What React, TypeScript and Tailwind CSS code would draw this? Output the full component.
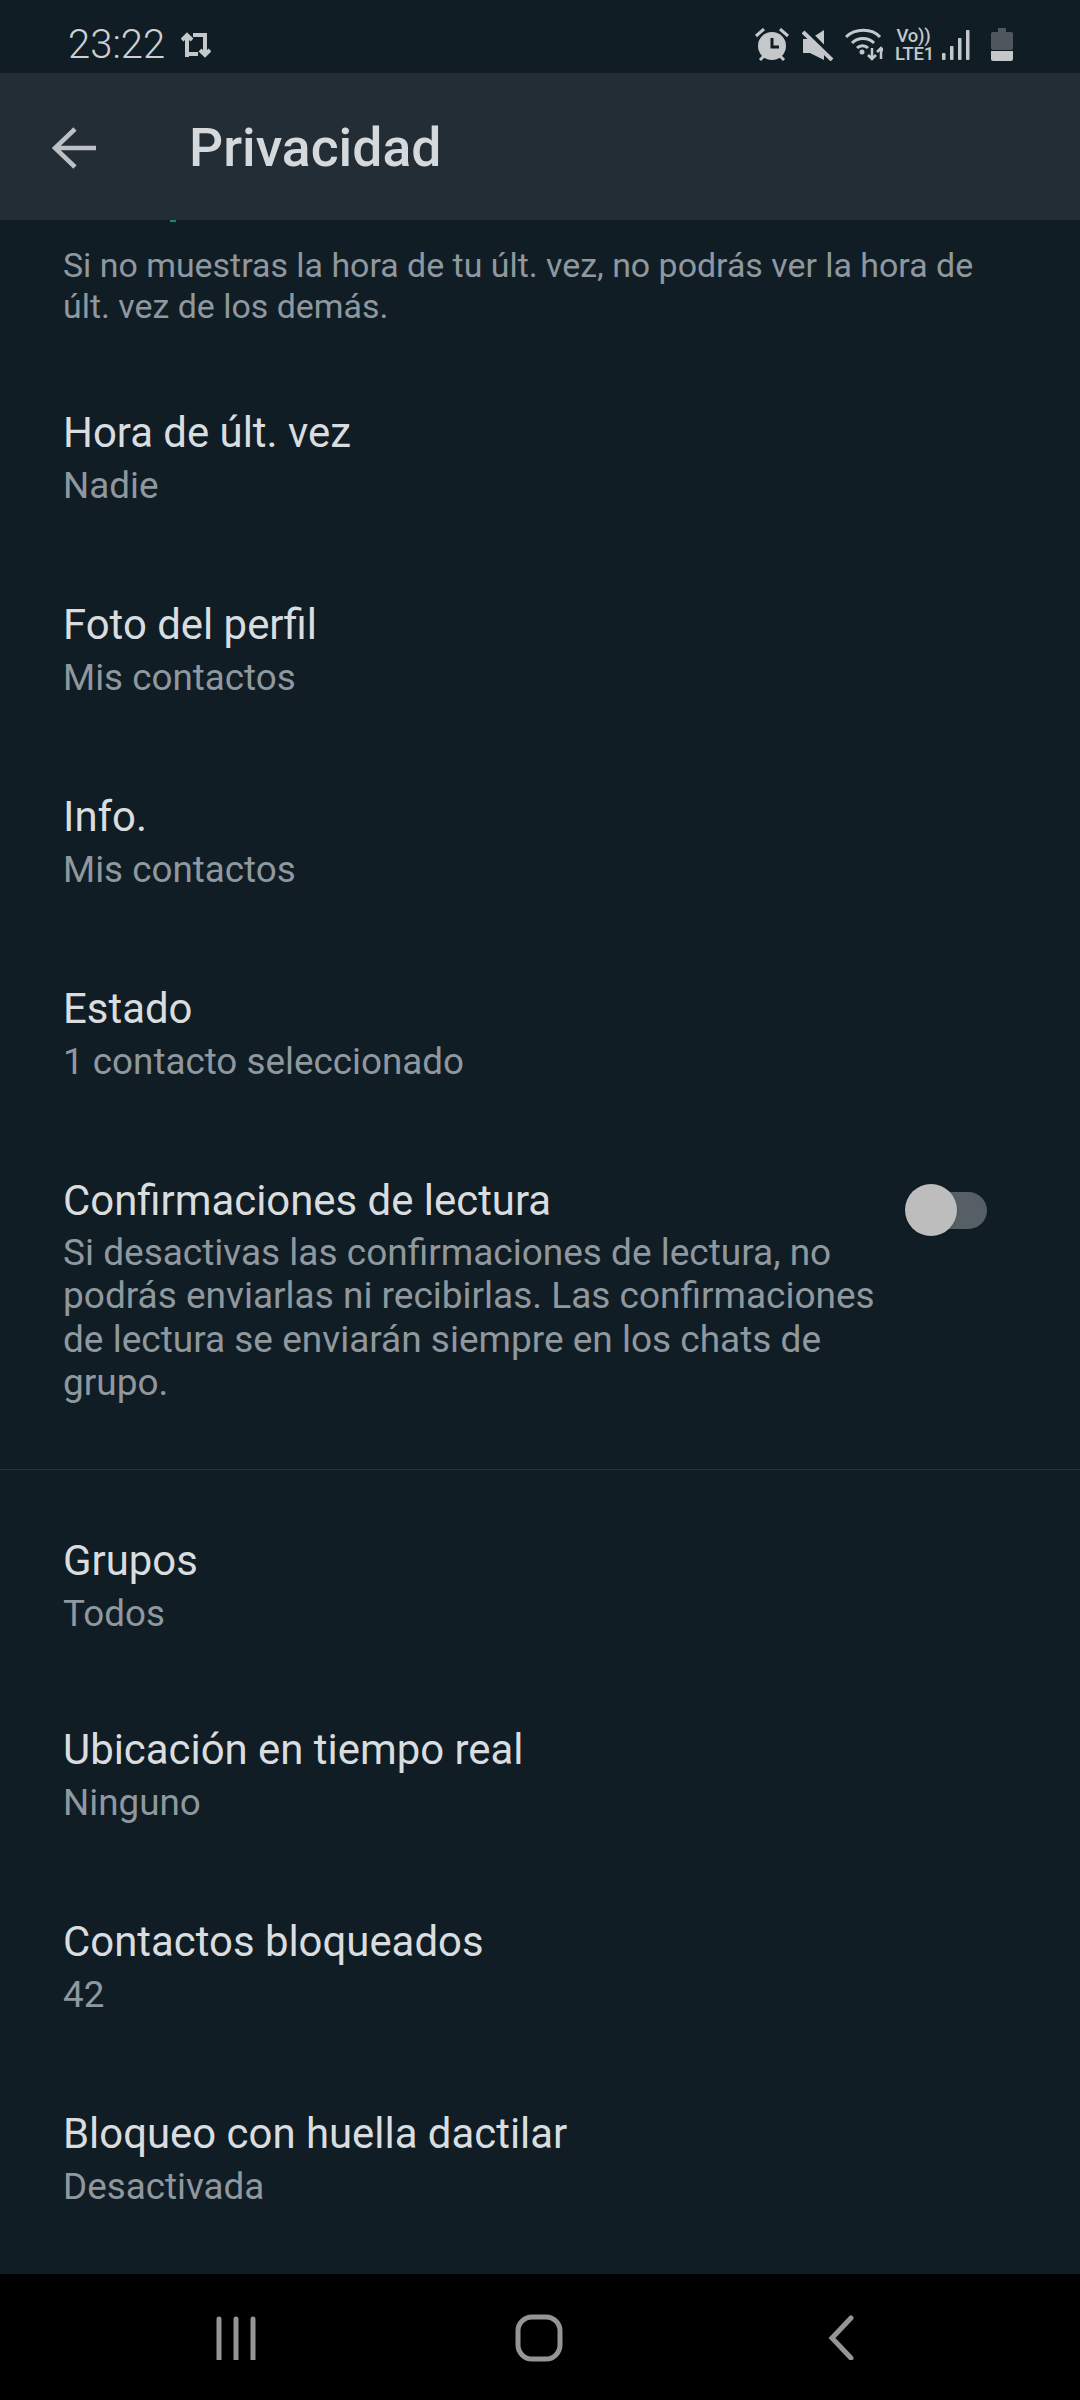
const font = { fontFamily: 'Roboto, "Noto Sans", sans-serif' };

function Row({ title, sub, tight }: { title: string; sub: string; tight?: boolean }) {
  return (
    <div className={tight ? "flex flex-col pl-[63px] pr-[64px] pb-[37px] pt-[46px]" : "flex flex-col pl-[63px] pr-[64px] pb-[40px] pt-[46px]"}>
      <div className="text-[41.9px] leading-[53px] text-[#dadddf]">{title}</div>
      <div className="text-[36.8px] leading-[53px] text-[#8f989e]">{sub}</div>
    </div>
  );
}

function StatusIcons() {
  return (
    <div className="flex items-center text-[#c4c8cb]">
      <svg width="34" height="34" viewBox="0 0 34 34" className="mr-[13px]" fill="none">
        <circle cx="17" cy="18" r="14" fill="#c4c8cb" />
        <path d="M17 10v9h7" stroke="#101d25" strokeWidth="3" />
        <path d="M1 8l8-7M33 8l-8-7M5 32l4-4M29 32l-4-4" stroke="#c4c8cb" strokeWidth="3" />
      </svg>
      <svg width="32" height="32" viewBox="0 0 32 32" className="mr-[11px]" fill="#c4c8cb">
        <path d="M1 10h7L22 1v30L8 24H1z" />
        <path d="M3 0l29 29" stroke="#101d25" strokeWidth="5" />
        <path d="M1 3l29 28" stroke="#c4c8cb" strokeWidth="4" />
      </svg>
      <svg width="38" height="34" viewBox="0 0 38 34" className="mr-[12px]" fill="none" stroke="#c4c8cb">
        <path d="M1 9C10 0 27 0 35 9" strokeWidth="3" />
        <path d="M7 15c6-6 16-6 22 0" strokeWidth="3" />
        <path d="M12 20c3-3 8-3 11 0" strokeWidth="3" />
        <circle cx="17" cy="24" r="2.5" fill="#c4c8cb" stroke="none" />
        <path d="M27 20v11M23 27l4 4 4-4" strokeWidth="2.5" />
        <path d="M36 31V20M32 24l4-4 4 4" strokeWidth="2.5" />
      </svg>
      <div className="mr-[8px] flex w-[39px] flex-col items-center text-[18.5px] font-medium leading-[18px] tracking-[-0.3px]">
        <span className="pr-[2px]">Vo))</span>
        <span>LTE1</span>
      </div>
      <svg width="28" height="32" viewBox="0 0 28 32" className="mr-[21px] mt-[1px]" fill="#c4c8cb">
        <rect x="0" y="24" width="3.5" height="7" rx="1" />
        <rect x="8" y="17" width="3.5" height="14" rx="1" />
        <rect x="16" y="9" width="3.5" height="22" rx="1" />
        <rect x="24" y="1" width="3.5" height="30" rx="1" />
      </svg>
      <svg width="22" height="33" viewBox="0 0 22 33">
        <path d="M7 0h8v5H7z" fill="#4d575d" />
        <rect x="0" y="4" width="22" height="18" rx="2" fill="#4d575d" />
        <path d="M0 23h22v8a2 2 0 0 1-2 2H2a2 2 0 0 1-2-2z" fill="#c4c8cb" />
      </svg>
    </div>
  );
}

export default function App() {
  return (
    <div style={font} className="flex h-[2400px] w-[1080px] flex-col overflow-hidden bg-[#111d25]">
      <div className="flex h-[73px] shrink-0 items-center justify-between bg-[#101d25] pl-[68px] pr-[67px] pt-[16px]">
        <div className="flex items-center">
          <span className="text-[40px] font-light leading-[44px] text-[#ccd0d3]">23:22</span>
          <svg width="30" height="26" viewBox="0 0 30 26" className="ml-[16px]" fill="none" stroke="#c4c8cb" strokeWidth="4">
            <path d="M6 25V3M1 8l5-5 5 5" />
            <path d="M6 22h11" />
            <path d="M24 1v22M19 18l5 5 5-5" />
            <path d="M12 3h12" />
          </svg>
        </div>
        <StatusIcons />
      </div>
      <div className="flex h-[147px] shrink-0 items-center bg-[#232d36] pl-[52px]">
        <svg width="44" height="42" viewBox="0 0 44 42" className="mt-[2px]" fill="none" stroke="#bcc1c5" strokeWidth="4.5">
          <path d="M44 21H3M23 2L3 21l20 19" />
        </svg>
        <span className="ml-[93px] mt-[2px] text-[53.5px] font-medium leading-[56px] text-[#d6d9dc]">Privacidad</span>
      </div>
      <div className="flex flex-1 flex-col overflow-hidden">
        <div className="ml-[170px] h-[2px] w-[6px] bg-[#0b8f7c]" />
        <p className="mt-[23px] w-[1000px] pl-[63px] text-[33.9px] leading-[41px] text-[#8f989e]">
          Si no muestras la hora de tu últ. vez, no podrás ver la hora de últ. vez de los demás.
        </p>
        <div className="mt-[33px]" />
        <Row title="Hora de últ. vez" sub="Nadie" />
        <Row title="Foto del perfil" sub="Mis contactos" />
        <Row title="Info." sub="Mis contactos" />
        <Row title="Estado" sub="1 contacto seleccionado" />
        <div className="flex items-start justify-between pl-[63px] pr-[93px] pb-[65px] pt-[46px]">
          <div className="flex w-[830px] flex-col">
            <div className="text-[41.9px] leading-[53px] text-[#dadddf]">Confirmaciones de lectura</div>
            <div className="mt-[4px] text-[37px] leading-[43.3px] text-[#8f989e]">
              Si desactivas las confirmaciones de lectura, no podrás enviarlas ni recibirlas. Las confirmaciones de lectura se enviarán siempre en los chats de grupo.
            </div>
          </div>
          <div className="relative mt-[10px] h-[52px] w-[82px] shrink-0">
            <div className="absolute right-0 top-[8px] h-[37px] w-[56px] rounded-full bg-[#555f65]" />
            <div className="absolute left-0 top-0 h-[52px] w-[52px] rounded-full bg-[#bdbdbd] shadow-sm" />
          </div>
        </div>
        <div className="h-px shrink-0 bg-[#2a353d]" />
        <div className="mt-[18px]" />
        <Row title="Grupos" sub="Todos" tight />
        <Row title="Ubicación en tiempo real" sub="Ninguno" />
        <Row title="Contactos bloqueados" sub="42" />
        <Row title="Bloqueo con huella dactilar" sub="Desactivada" />
      </div>
      <div className="flex h-[126px] shrink-0 items-start bg-black pl-[216px] pt-[40px]">
        <svg width="40" height="46" viewBox="0 0 40 46" fill="none" stroke="#959595" strokeWidth="5" strokeLinecap="round">
          <path d="M3 5v40M20 5v40M37 5v40" />
        </svg>
        <svg width="48" height="48" viewBox="0 0 48 48" className="ml-[259px]" fill="none" stroke="#959595" strokeWidth="5">
          <rect x="3" y="3" width="42" height="42" rx="14" />
        </svg>
        <svg width="26" height="46" viewBox="0 0 26 46" className="ml-[265px]" fill="none" stroke="#959595" strokeWidth="5" strokeLinecap="round">
          <path d="M23 4L4 24l19 20" />
        </svg>
      </div>
    </div>
  );
}
